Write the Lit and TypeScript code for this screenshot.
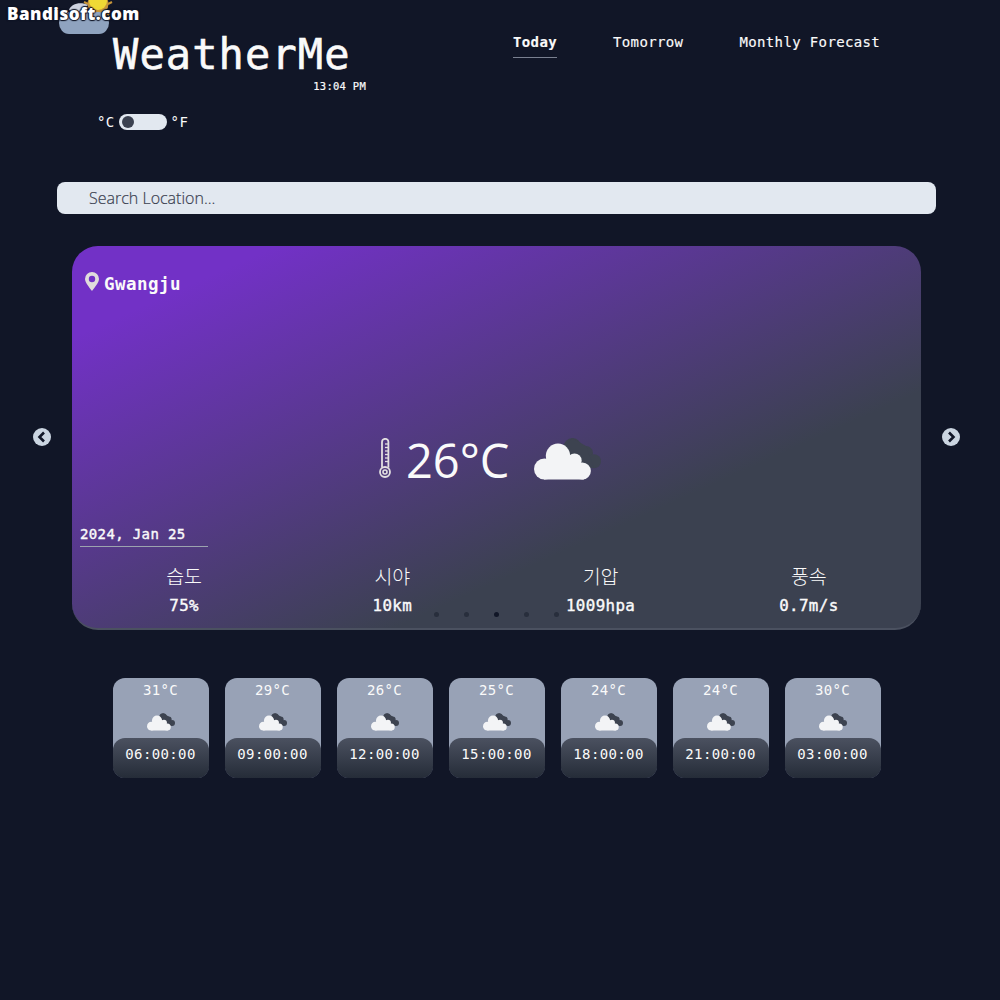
import { LitElement, html, css, svg } from "lit";
import { customElement, property } from "lit/decorators.js";

@customElement("cloud-icon")
class CloudIcon extends LitElement {
  static styles = css`
    :host { display: block; }
    .icon { display: block; width: 100%; height: 100%; }
  `;
  render() {
    return html`<svg class="icon" viewBox="0 0 67 42">
      <g fill="#3d4350">
        <circle cx="38.5" cy="9" r="9"></circle>
        <circle cx="52" cy="15" r="7"></circle>
        <circle cx="60" cy="23.3" r="7"></circle>
        <path d="M38 0 L52 8 L60 30 H44 L30 12Z"></path>
      </g>
      <g fill="#f3f4f6">
        <circle cx="10.5" cy="31" r="10.5"></circle>
        <circle cx="24" cy="17.8" r="12.2"></circle>
        <circle cx="40.5" cy="22.7" r="7.2"></circle>
        <circle cx="48.3" cy="33" r="8.6"></circle>
        <path d="M10 22 L20 16 H34 L42 22 L50 27 V41.6 H10Z"></path>
      </g>
    </svg>`;
  }
}

@customElement("hour-card")
class HourCard extends LitElement {
  @property() temp = "";
  @property() time = "";
  static styles = css`
    :host {
      display: flex; flex-direction: column; align-items: center;
      width: 96px; height: 100px; border-radius: 12px; overflow: hidden;
      background: #98a2b6; color: #fafafa;
      font: 14px/24px "DejaVu Sans Mono", monospace; letter-spacing: 0.37px;
    }
    .temp { margin-right: 1px; }
    .cloud { width: 28px; height: 18px; margin: 11px 0 7px; }
    .time {
      align-self: stretch; height: 40px; line-height: 32px; text-align: center; padding-right: 1px;
      border-radius: 12px; background: linear-gradient(#4b5160, #252c38);
    }
    .wrap { align-self: stretch; background: linear-gradient(#98a2b6 50%, #111627 50%); }
  `;
  render() {
    return html`<div class="temp">${this.temp}</div>
      <cloud-icon class="cloud"></cloud-icon>
      <div class="wrap"><div class="time">${this.time}</div></div>`;
  }
}

const METRICS = [["습도", "75%"], ["시야", "10km"], ["기압", "1009hpa"], ["풍속", "0.7m/s"]];
const HOURS = [
  ["31°C", "06:00:00"], ["29°C", "09:00:00"], ["26°C", "12:00:00"], ["25°C", "15:00:00"],
  ["24°C", "18:00:00"], ["24°C", "21:00:00"], ["30°C", "03:00:00"],
];
const TICKS = [6, 9.5, 13, 16.5, 20, 23.5];

@customElement("app-root")
class AppRoot extends LitElement {
  static styles = css`
    :host {
      display: block; position: relative; box-sizing: border-box; width: 1000px; height: 1000px; overflow: hidden;
      background: #111627; color: #fafafa;
      font: 14px/24px "DejaVu Sans Mono", monospace; letter-spacing: 0.37px;
    }
    .watermark {
      position: absolute; left: 7px; top: 2px; z-index: 2; white-space: nowrap;
      font: 800 17px/24px "Open Sans", sans-serif; letter-spacing: 0.5px; color: #fff;
      text-shadow: 0 0 2px #111627, 1px 0 1px #111627, -1px 0 1px #111627, 0 1px 1px #111627, 0 -1px 1px #111627;
    }
    .header { display: flex; align-items: flex-start; height: 98px; }
    .brand { width: 366px; display: flex; flex-direction: column; }
    .logo { display: block; width: 60px; height: 35px; margin-left: 56px; }
    .title { margin: 0 0 0 113px; font-size: 42px; font-weight: 400; line-height: 40px; letter-spacing: 1.11px; white-space: nowrap; -webkit-text-stroke: 0.6px; }
    .clock { align-self: flex-end; margin-top: 3px; font-size: 10.5px; line-height: 16px; letter-spacing: 0.28px; -webkit-text-stroke: 0.2px; }
    .tabs { display: flex; gap: 56px; margin: 30px 0 0 147px; -webkit-text-stroke: 0.15px; }
    .tab { white-space: nowrap; height: 27px; }
    .tab.active { font-weight: 700; border-bottom: 1px solid #7a8090; }
    .units { display: flex; align-items: center; gap: 4px; height: 16px; margin: 16px 0 0 97px; }
    .switch { display: flex; align-items: center; width: 48px; height: 16px; padding-left: 3px; box-sizing: border-box; border-radius: 8px; background: #e2e8f0; }
    .knob { width: 12px; height: 12px; border-radius: 50%; background: #3b4150; }
    .search {
      margin: 52px 64px 0 57px; height: 32px; border-radius: 8px; padding-left: 32px; background: #e2e8f0; color: #3b4150;
      font: 300 16px/32px "Open Sans", "Noto Sans", sans-serif; letter-spacing: 0; -webkit-text-stroke: 0.2px;
    }
    .carousel { display: flex; align-items: center; gap: 21px; margin: 32px 0 0 33px; }
    .arrow { display: block; width: 18px; height: 18px; flex: none; margin-bottom: 2px; }
    .card {
      position: relative; box-sizing: border-box; width: 849px; height: 384px; padding: 26px 8px 0; border-radius: 26px;
      border-bottom: 2px solid #4b5160; display: flex; flex-direction: column;
      background: linear-gradient(to bottom right, #7231c6 12%, #3b4150 69%);
    }
    .place { display: flex; align-items: center; gap: 5px; height: 22px; padding-left: 5px; font-size: 17.5px; font-weight: 700; letter-spacing: 0.46px; }
    .place-name { margin-top: 2px; }
    .pin { width: 14px; height: 19px; margin-top: -3px; }
    .now { display: flex; align-items: flex-start; height: 56px; margin: 137px 0 0 299px; }
    .thermo { width: 12px; height: 40px; margin-top: 7px; }
    .degrees { margin: 1px 0 0 15px; width: 114px; font: 47px/56px "Open Sans", sans-serif; letter-spacing: 0; }
    .cloud { width: 67px; height: 42px; margin: 6.5px 0 0 14px; }
    .date { width: 128px; height: 24px; margin-top: 35px; border-bottom: 1px solid #9ca3af; -webkit-text-stroke: 0.4px; }
    .metrics { display: grid; grid-template-columns: repeat(4, 1fr); margin-top: 15px; text-align: center; }
    .label { font: 300 19.5px/28px "Noto Sans CJK KR", sans-serif; letter-spacing: 0; }
    .value { margin-top: 2px; font-size: 15.8px; line-height: 28px; letter-spacing: 0.39px; -webkit-text-stroke: 0.4px; }
    .dots { position: absolute; left: 362px; top: 366px; display: flex; gap: 25px; }
    .dot { width: 5px; height: 5px; border-radius: 50%; background: #282e3c; }
    .dot.on { background: #111627; }
    .hours { display: flex; gap: 16px; margin: 48px 0 0 113px; }
  `;

  arrow(d: string) {
    return html`<svg class="arrow" viewBox="0 0 18 18">
      <circle cx="9" cy="9" r="9" fill="#cbd5e1"></circle>
      <path d=${d} fill="none" stroke="#111627" stroke-width="2.6"></path>
    </svg>`;
  }

  render() {
    return html`
      <div class="watermark">Bandisoft.com</div>
      <header class="header">
        <div class="brand">
          <svg class="logo" viewBox="0 0 60 35">
            <g stroke="#c8963a" stroke-width="2"><path d="M28 2l4 2M52 4l4-2M49 12l4 3"></path></g>
            <circle cx="42" cy="4" r="10.5" fill="#c8963a"></circle>
            <circle cx="42" cy="1" r="9" fill="#f0d935"></circle>
            <path d="M13 10C15 4 24 1 32 5l-10 8z" fill="#cdd2e0"></path>
            <path d="M13 12H43a10 11 0 0 1 0 22H13a10 11 0 0 1 0-22z" fill="#8fa3bf"></path>
          </svg>
          <h1 class="title">WeatherMe</h1>
          <div class="clock">13:04 PM</div>
        </div>
        <nav class="tabs">
          <div class="tab active">Today</div>
          <div class="tab">Tomorrow</div>
          <div class="tab">Monthly Forecast</div>
        </nav>
      </header>
      <div class="units"><span>°C</span><div class="switch"><div class="knob"></div></div><span>°F</span></div>
      <div class="search">Search Location...</div>
      <section class="carousel">
        ${this.arrow("M11 4.5L6.5 9L11 13.5")}
        <article class="card">
          <div class="place">
            <svg class="pin" viewBox="0 0 14 19">
              <path fill="#e0dcdc" fill-rule="evenodd" d="M7 0a7 7 0 0 1 7 7c0 3.5-4 8-7 12C4 15 0 10.500 0 7a7 7 0 0 1 7-7zM7 3.800a3.200 3.200 0 1 0 0 6.400a3.200 3.200 0 0 0 0-6.400z"></path>
            </svg>
            <span class="place-name">Gwangju</span>
          </div>
          <div class="now">
            <svg class="thermo" viewBox="0 0 12 40" fill="none" stroke="#e2dfe0">
              <path stroke-width="1.8" d="M3 29.500V4a3.200 3.200 0 0 1 6.400 0V29.500"></path>
              <circle stroke-width="1.800" cx="6" cy="34" r="5"></circle>
              <circle stroke-width="1.600" cx="6" cy="34" r="2"></circle>
              ${TICKS.map((y) => svg`<path stroke-width="1.3" d="M6 ${y}H9"></path>`)}
            </svg>
            <div class="degrees">26°C</div>
            <cloud-icon class="cloud"></cloud-icon>
          </div>
          <div class="date">2024, Jan 25</div>
          <div class="metrics">
            ${METRICS.map(([l, v]) => html`<div><div class="label">${l}</div><div class="value">${v}</div></div>`)}
          </div>
          <div class="dots">
            ${[0, 1, 2, 3, 4].map((i) => html`<div class="dot ${i === 2 ? "on" : ""}"></div>`)}
          </div>
        </article>
        ${this.arrow("M7 4.500L11.500 9L7 13.500")}
      </section>
      <section class="hours">
        ${HOURS.map(([t, h]) => html`<hour-card .temp=${t} .time=${h}></hour-card>`)}
      </section>
    `;
  }
}
